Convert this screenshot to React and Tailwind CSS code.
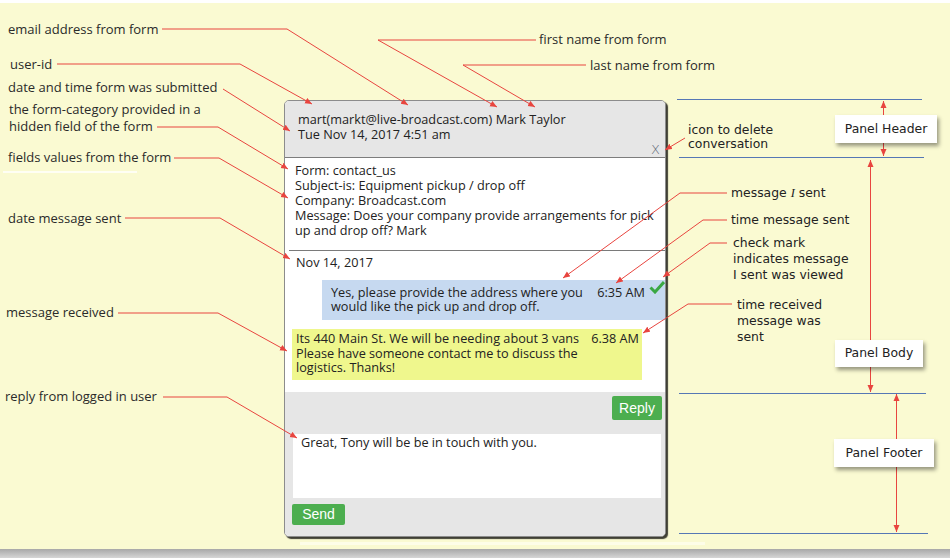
const red = '#e8453f';

function Label({ x, y, children, className = '' }) {
    return (
        <div className={`absolute whitespace-nowrap ${className}`} style={{ left: x, top: y }}>
            {children}
        </div>
    );
}

function Leader({ points, end = true, start = false }) {
    return (
        <polyline
            points={points}
            fill="none"
            stroke={red}
            strokeWidth="1"
            markerEnd={end ? 'url(#arrow)' : undefined}
            markerStart={start ? 'url(#arrowStart)' : undefined}
        />
    );
}

function Annotations() {
    return (
        <svg className="absolute inset-0 z-10 pointer-events-none" width="950" height="558">
            <defs>
                <marker id="arrow" markerWidth="8" markerHeight="8" refX="7" refY="3" orient="auto" markerUnits="userSpaceOnUse">
                    <path d="M0,0 L7,3 L0,6 z" fill={red} />
                </marker>
                <marker id="arrowStart" markerWidth="8" markerHeight="8" refX="0" refY="3" orient="auto" markerUnits="userSpaceOnUse">
                    <path d="M7,0 L0,3 L7,6 z" fill={red} />
                </marker>
            </defs>
            <line x1="3" y1="172" x2="137" y2="172" stroke="#ffffff" strokeWidth="1.5" />
            {/* left side */}
            <Leader points="162,29 287,29 408,105" />
            <Leader points="57,64 240,64 312,104" />
            <Leader points="223,89 290,131" />
            <Leader points="157,127 218,127 288,169" />
            <Leader points="174,158 219,158 288,198" />
            <Leader points="125,218 220,218 290,259" />
            <Leader points="118,313 218,313 287,351" />
            <Leader points="163,397 227,397 297,438" />
            {/* top */}
            <Leader points="536,40 378,40 497,107" />
            <Leader points="586,65 463,65 535,107" />
            {/* right side */}
            <Leader points="685,138 665,150" />
            <Leader points="727,193 680,193 563,278" />
            <Leader points="727,220 703,220 616,283" />
            <Leader points="727,243 710,243 663,277" />
            <Leader points="732,304 688,304 643,333" />
            {/* section lines */}
            <line x1="677" y1="99.5" x2="922" y2="99.5" stroke="#5577b5" strokeWidth="1" />
            <line x1="679" y1="157.5" x2="924" y2="157.5" stroke="#5577b5" strokeWidth="1" />
            <line x1="679" y1="393.5" x2="926" y2="393.5" stroke="#5577b5" strokeWidth="1" />
            <line x1="679" y1="533.5" x2="928" y2="533.5" stroke="#5577b5" strokeWidth="1" />
            <Leader points="883.5,101 883.5,156" start />
            <Leader points="870.5,160 870.5,392" start />
            <Leader points="896.5,394 896.5,532" start />
        </svg>
    );
}

function CheckMark() {
    return (
        <svg width="16" height="14" viewBox="0 0 16 14">
            <path d="M1.5,7.5 L6,12 L15,2" fill="none" stroke="#3aa843" strokeWidth="3" strokeLinejoin="miter" />
        </svg>
    );
}

function Panel() {
    return (
        <div className="w-[382px] h-[437px] flex flex-col border border-[#8c8c8c] rounded-[5px] overflow-hidden shadow-[2px_2px_1px_rgba(0,0,0,0.75)] text-[12.7px] text-[#222] font-['Open_Sans',sans-serif] bg-white whitespace-nowrap">
            <div className="h-[57px] shrink-0 bg-[#e6e6e6] border-b border-[#7d7d7d] flex flex-col pt-[11px] pl-[13px] pr-[5px] leading-[15px]">
                <div>mart(markt@live-broadcast.com) Mark Taylor</div>
                <div>Tue Nov 14, 2017 4:51 am</div>
                <div className="mt-auto self-end text-[13px] leading-[12px] text-[#5d6675] pb-[1px] font-['DejaVu_Sans',sans-serif] font-light">X</div>
            </div>
            <div className="h-[234px] shrink-0 bg-white flex flex-col">
                <div className="pt-[5px] px-[10px] leading-[15px]">
                    <div>Form: contact_us</div>
                    <div>Subject-is: Equipment pickup / drop off</div>
                    <div>Company: Broadcast.com</div>
                    <div>Message: Does your company provide arrangements for pick</div>
                    <div>up and drop off? Mark</div>
                </div>
                <div className="mt-[12px] ml-[4px] border-t border-[#7a7a7a]" />
                <div className="pl-[11px] pt-[4px] leading-[15px]">Nov 14, 2017</div>
                <div className="mt-[10px] ml-[37px] h-[40px] bg-[#c6d9f0] flex pl-[9px] pt-[5px] leading-[14px]">
                    <div className="flex-1">
                        <div>Yes, please provide the address where you</div>
                        <div>would like the pick up and drop off.</div>
                    </div>
                    <div className="flex items-start gap-[4px]">
                        <span>6:35 AM</span>
                        <span className="-mt-[5px]"><CheckMark /></span>
                    </div>
                </div>
                <div className="mt-[9px] ml-[7px] w-[350px] h-[51px] bg-[#eff78d] flex pl-[4px] pt-[2px] pr-[3px] leading-[14.5px]">
                    <div className="flex-1">
                        <div>Its 440 Main St. We will be needing about 3 vans</div>
                        <div>Please have someone contact me to discuss the</div>
                        <div>logistics. Thanks!</div>
                    </div>
                    <div>6.38 AM</div>
                </div>
            </div>
            <div className="flex-1 bg-[#e6e6e6] flex flex-col pt-[4px] pl-[7px] pr-[3px]">
                <div className="self-end h-[24px] w-[50px] bg-[#4cae4f] rounded-[2px] text-white text-[14px] font-['Liberation_Sans',sans-serif] flex items-center justify-center">Reply</div>
                <div className="mt-[14px] ml-[1px] mr-[1px] h-[64px] bg-white pl-[8px] pt-[1px] leading-[15px]">Great, Tony will be be in touch with you.</div>
                <div className="mt-[6px] h-[21px] w-[53px] bg-[#4cae4f] rounded-[2px] text-white text-[14px] font-['Liberation_Sans',sans-serif] flex items-center justify-center">Send</div>
            </div>
        </div>
    );
}

function SectionBox({ x, y, w, h, children }) {
    return (
        <div
            className="absolute z-20 bg-white shadow-[2px_3px_4px_rgba(0,0,0,0.4)] flex items-center justify-center text-[12.4px] text-[#222] font-['DejaVu_Sans',sans-serif]"
            style={{ left: x, top: y, width: w, height: h }}
        >
            {children}
        </div>
    );
}

export default function App() {
    return (
        <div className="w-[950px] h-[558px] relative overflow-hidden bg-[#fafad2] flex flex-col">
            <div className="h-[3px] bg-white shrink-0" />
            <div className="flex-1 pt-[97px] pl-[284px]">
                <Panel />
            </div>
            <div className="h-[3px] bg-[#fdfde8] shrink-0 mb-[4px] ml-[300px] mr-[245px]" />
            <div className="h-[9px] shrink-0 bg-gradient-to-b from-[#a8a8a8] to-[#d6d6d6]" />

            <div className="absolute inset-0 text-[13px] leading-[16px] text-[#2a2a2a] font-['Open_Sans',sans-serif]">
                <Label x={8} y={21}>email address from form</Label>
                <Label x={10} y={56}>user-id</Label>
                <Label x={8} y={79}>date and time form was submitted</Label>
                <Label x={9} y={101} className="leading-[17px]">the form-category provided in a<br />hidden field of the form</Label>
                <Label x={8} y={149}>fields values from the form</Label>
                <Label x={8} y={210}>date message sent</Label>
                <Label x={6} y={304}>message received</Label>
                <Label x={5} y={388}>reply from logged in user</Label>
                <Label x={539} y={31}>first name from form</Label>
                <Label x={590} y={57}>last name from form</Label>
            </div>
            <div className="absolute inset-0 text-[12.4px] leading-[16px] text-[#222] font-['DejaVu_Sans',sans-serif]">
                <Label x={688} y={123} className="leading-[14px]">icon to delete<br />conversation</Label>
                <Label x={731} y={185}>message <i className="font-['Liberation_Serif',serif]">I</i> sent</Label>
                <Label x={731} y={212}>time message sent</Label>
                <Label x={733} y={235}>check mark<br />indicates message<br />I sent was viewed</Label>
                <Label x={737} y={297}>time received<br />message was<br />sent</Label>
            </div>
            <Annotations />
            <SectionBox x={835} y={115} w={102} h={28}>Panel Header</SectionBox>
            <SectionBox x={835} y={340} w={88} h={27}>Panel Body</SectionBox>
            <SectionBox x={834} y={439} w={100} h={28}>Panel Footer</SectionBox>
        </div>
    );
}
